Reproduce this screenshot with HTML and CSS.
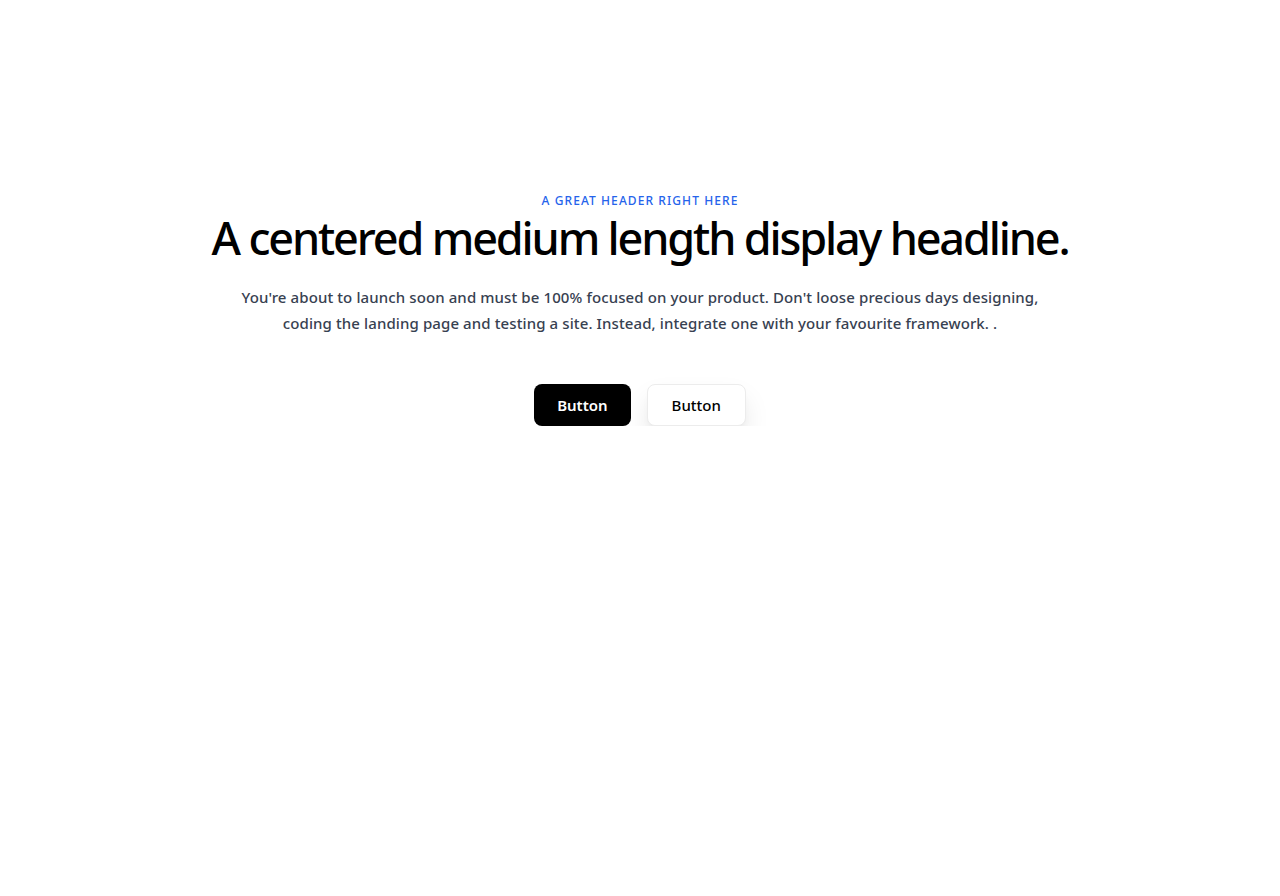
FILE: index.html
```html
<!DOCTYPE html>
<html lang="en">
<head>
<meta charset="utf-8">
<title>Hero</title>
<link rel="stylesheet" href="styles.css">
</head>
<body>
<section class="hero">
  <div class="hero-inner">
    <p class="eyebrow">A great header right here</p>
    <h1 class="headline">A centered medium length display headline.</h1>
    <p class="lead">You're about to launch soon and must be 100% focused on your product. Don't loose precious days designing, coding the landing page and testing a site. Instead, integrate one with your favourite framework. .</p>
    <div class="actions">
      <a class="btn btn-primary" href="#">Button</a>
      <a class="btn btn-secondary" href="#">Button</a>
    </div>
  </div>
</section>
</body>
</html>
```

FILE: styles.css
```css
* { box-sizing: border-box; }
html, body { margin: 0; padding: 0; background: #ffffff; }
body { font-family: "Noto Sans", "Open Sans", sans-serif; color: #000; }

.hero { padding-top: 191px; display: flex; justify-content: center; }
.hero-inner { display: flex; flex-direction: column; align-items: center; text-align: center; }

.eyebrow {
  margin: 0;
  font-size: 12px;
  line-height: 20px;
  letter-spacing: 0.09em;
  text-transform: uppercase;
  color: #2563eb;
  font-weight: 500;
}
.headline {
  margin: -1px 0 0;
  font-size: 45px;
  line-height: 56px;
  font-weight: 500;
  letter-spacing: -0.048em;
  color: #000;
}
.lead {
  margin: 18px 0 0;
  max-width: 830px;
  font-size: 15px;
  line-height: 26px;
  font-weight: 500;
  letter-spacing: 0.007em;
  color: #374151;
}
.actions { display: flex; gap: 16px; margin-top: 48px; }
.btn {
  display: inline-flex; align-items: center; justify-content: center;
  height: 42px; padding: 0 23px;
  border-radius: 8px;
  font-size: 15px; font-weight: 600;
  text-decoration: none;
}
.btn-primary { background: #000; color: #fff; }
.btn-secondary {
  background: #fff; color: #000; font-weight: 500;
  padding: 0 24px;
  border: 1px solid #ececec;
  box-shadow: 0 14px 28px -4px rgba(0,0,0,0.13), 0 6px 10px -4px rgba(0,0,0,0.06);
}
```
